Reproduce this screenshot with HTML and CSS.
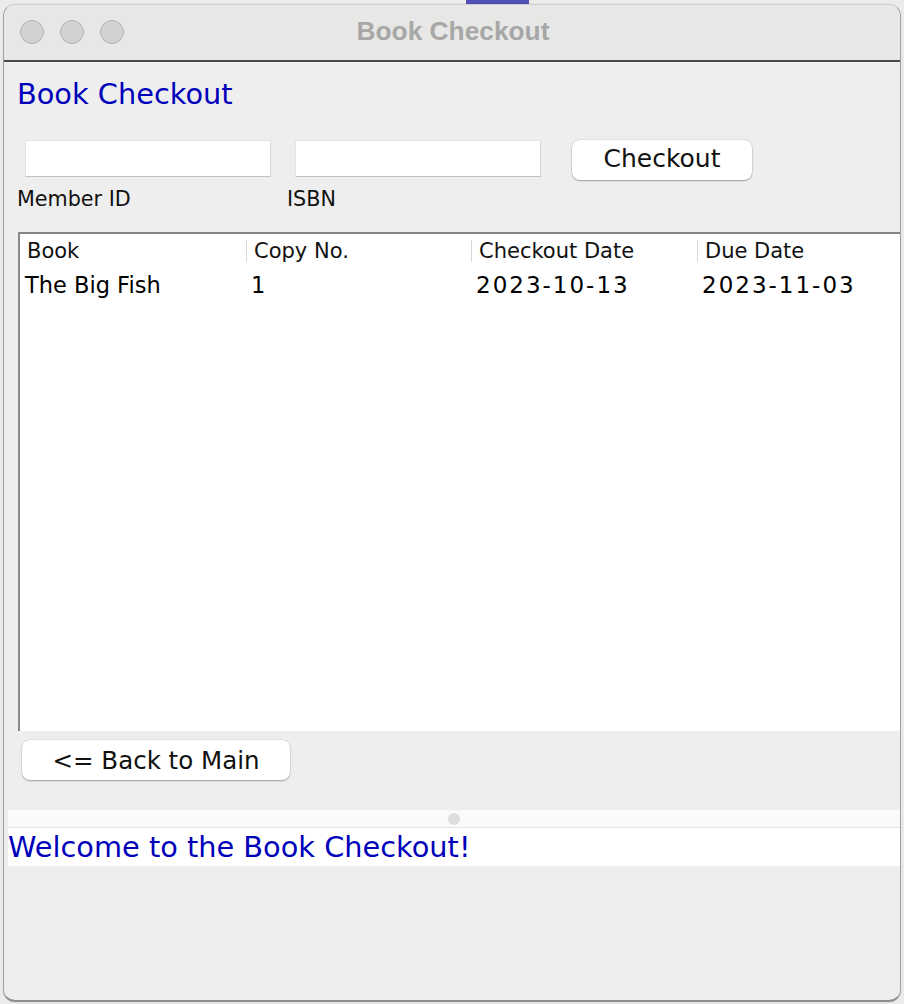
FILE: index.html
```html
<!DOCTYPE html>
<html lang="en">
<head>
<meta charset="utf-8">
<title>Book Checkout</title>
<link rel="stylesheet" href="styles.css">
</head>
<body>
<div class="accent"></div>
<div class="window">
  <div class="titlebar">
    <div class="lights">
      <span class="light"></span>
      <span class="light"></span>
      <span class="light"></span>
    </div>
    <div class="title">Book Checkout</div>
    <div class="spacer"></div>
  </div>
  <div class="content">
    <h1 class="heading">Book Checkout</h1>
    <div class="form">
      <input class="field" type="text">
      <input class="field" type="text">
      <button class="btn btn-checkout" type="button">Checkout</button>
      <div class="label">Member ID</div>
      <div class="label">ISBN</div>
      <div></div>
    </div>
    <div class="table">
      <div class="thead">
        <div class="th th-first">Book</div>
        <div class="th"><span class="sep"></span>Copy No.</div>
        <div class="th"><span class="sep"></span>Checkout Date</div>
        <div class="th"><span class="sep"></span>Due Date</div>
      </div>
      <div class="trow">
        <div class="td">The Big Fish</div>
        <div class="td">1</div>
        <div class="td date">2023-10-13</div>
        <div class="td date">2023-11-03</div>
      </div>
    </div>
    <button class="btn btn-back" type="button">&lt;= Back to Main</button>
    <div class="divider"><span class="dot"></span></div>
    <div class="status">Welcome to the Book Checkout!</div>
  </div>
</div>
</body>
</html>
```

FILE: styles.css
```css
* {
  box-sizing: border-box;
}

html,
body {
  margin: 0;
  padding: 0;
}

body {
  width: 904px;
  height: 1004px;
  overflow: hidden;
  background: #ececec;
  font-family: "DejaVu Sans", sans-serif;
  color: #111;
}

.accent {
  margin-left: 466px;
  width: 63px;
  height: 4px;
  background: #4f4fb5;
}

.window {
  margin-left: 3px;
  width: 898px;
  height: 998px;
  background: #eeeeee;
  border: 1px solid #a3a3a3;
  border-top-color: #cdcdcd;
  border-bottom: 2px solid #8e8e8e;
  border-radius: 12px;
  overflow: hidden;
  display: flex;
  flex-direction: column;
  box-shadow: 0 0 2px rgba(0, 0, 0, 0.12);
}

.titlebar {
  flex: none;
  height: 57px;
  background: #e7e7e6;
  border-bottom: 2px solid #4a4a4a;
  display: grid;
  grid-template-columns: 1fr auto 1fr;
}

.lights {
  display: flex;
  align-items: flex-start;
  gap: 16px;
  padding: 15px 0 0 16px;
}

.light {
  width: 24px;
  height: 24px;
  border-radius: 50%;
  background: #d1d1d1;
  border: 1px solid #b4b4b4;
}

.title {
  font-family: "Liberation Sans", Arial, sans-serif;
  font-weight: bold;
  font-size: 26.3px;
  line-height: 52px;
  color: #a7a7a7;
  padding-left: 2px;
}

.content {
  flex: 1;
  display: flex;
  flex-direction: column;
  align-items: flex-start;
}

.heading {
  margin: 15px 0 0 13px;
  font-size: 28.8px;
  line-height: 34px;
  font-weight: normal;
  color: #0000bb;
}

.form {
  margin: 29px 0 0 13px;
  display: grid;
  grid-template-columns: 270px 270px 195px;
  row-gap: 7px;
  align-items: start;
}

.field {
  margin: 0 0 0 8px;
  width: 246px;
  height: 37px;
  padding: 0;
  background: #fff;
  border: 1px solid #e4e4e4;
  border-bottom-color: #c0c0c0;
  border-right-color: #d6d6d6;
  outline: none;
}

.btn {
  height: 40px;
  padding: 0;
  background: #fff;
  border: none;
  border-radius: 8px;
  box-shadow: 0 1px 1.5px rgba(0, 0, 0, 0.3), 0 0 0 0.5px rgba(0, 0, 0, 0.12);
  font-family: "DejaVu Sans", sans-serif;
  font-size: 24.5px;
  color: #111;
}

.btn-checkout {
  margin-left: 15px;
  width: 180px;
  font-size: 25px;
  line-height: 38px;
  padding-bottom: 2px;
}

.label {
  font-size: 20.7px;
  line-height: 24px;
  color: #111;
}

.table {
  margin: 21px 0 0 14px;
  align-self: stretch;
  height: 499px;
  background: #fff;
  border-top: 2px solid #858585;
  border-left: 2px solid #8a8a8a;
}

.thead,
.trow {
  display: grid;
  grid-template-columns: 226px 225px 226px 1fr;
}

.thead {
  height: 33px;
}

.th {
  display: flex;
  align-items: center;
  font-size: 21px;
  color: #111;
}

.th-first {
  padding-left: 7px;
}

.sep {
  width: 1px;
  height: 22px;
  margin-right: 7px;
  background: #d6d6d6;
}

.trow {
  font-size: 22.5px;
  line-height: 36px;
  color: #000;
}

.td {
  padding-left: 5px;
  white-space: nowrap;
}

.date {
  font-size: 23px;
  letter-spacing: 2px;
}

.btn-back {
  margin: 9px 0 0 18px;
  width: 268px;
}

.divider {
  margin: 30px 0 0 4px;
  align-self: stretch;
  height: 18px;
  background: #fafafa;
  border-bottom: 1px solid #e6e6e6;
  display: flex;
  align-items: center;
  justify-content: center;
}

.dot {
  width: 12px;
  height: 12px;
  border-radius: 50%;
  background: #dddddd;
}

.status {
  margin-left: 4px;
  align-self: stretch;
  height: 38px;
  background: #fff;
  font-size: 28.8px;
  line-height: 38px;
  color: #0000bb;
  white-space: nowrap;
}
```
